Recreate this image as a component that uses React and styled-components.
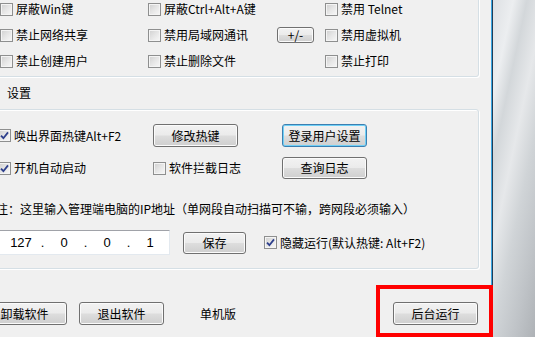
import React from 'react'
import styled, { createGlobalStyle } from 'styled-components'

const GlobalStyle = createGlobalStyle`
  html, body {
    margin: 0;
    padding: 0;
    overflow: hidden;
  }
  body {
    font-family: "Noto Sans CJK SC", "Noto Sans", "Liberation Sans", sans-serif;
    font-size: 12px;
    color: #000;
  }
`

const Page = styled.div`
  position: relative;
  width: 535px;
  height: 337px;
  display: flex;
  overflow: hidden;
`

const Window = styled.div`
  width: 491px;
  height: 337px;
  flex: none;
  background: #f0f0f0;
  display: flex;
  flex-direction: column;
  overflow: hidden;
`

const WindowEdge = styled.div`
  width: 1px;
  flex: none;
  background: #3aa6e2;
  border-right: 1px solid #1f3d58;
`

const Desktop = styled.div`
  flex: 1;
  background: linear-gradient(
    102deg,
    #dde0e3 0%,
    #eceef0 18%,
    #d3d7da 30%,
    #e6e8ea 46%,
    #d0d4d7 62%,
    #bfc3c7 82%,
    #aeb2b6 100%
  );
`

const Highlight = styled.div`
  position: absolute;
  left: 376px;
  top: 285px;
  width: 117px;
  height: 52px;
  box-sizing: border-box;
  border: 4px solid #f00;
  pointer-events: none;
`

const GroupBox = styled.div`
  box-sizing: border-box;
  flex: none;
  margin-left: -20px;
  width: 499px;
  height: ${p => p.$h}px;
  border: 1px solid #d5dfe5;
  border-radius: 3px;
  box-shadow: inset 1px 1px 0 #fff, 1px 1px 0 #fff;
  padding: ${p => p.$pad};
`

const TopBox = styled(GroupBox)`
  margin-top: -10px;
`

const CheckGrid = styled.div`
  display: grid;
  grid-template-columns: 148px 129px 48px auto;
  grid-auto-rows: 16px;
  row-gap: 10px;
  align-items: center;
`

const SettingsGrid = styled.div`
  display: grid;
  grid-template-columns: 155px 129px auto;
  grid-template-rows: 23px 22px;
  row-gap: 10px;
  align-items: center;
`

const SectionLabel = styled.div`
  height: 32px;
  flex: none;
  display: flex;
  align-items: center;
  padding-left: 7px;
  line-height: 16px;
`

const Label = styled.label`
  display: flex;
  align-items: center;
  gap: 3px;
  white-space: nowrap;
  line-height: 16px;
  margin-left: ${p => p.$ml || 0}px;
`

const Box = styled.span`
  box-sizing: border-box;
  width: 13px;
  height: 13px;
  flex: none;
  border: 1px solid #8e8f8f;
  background: linear-gradient(135deg, #cfcfcf 0%, #e6e6e6 50%, #f8f8f8 100%);
  box-shadow: inset 0 0 0 1px #f4f4f4;
  display: flex;
  align-items: center;
  justify-content: center;
`

const Button = styled.div`
  box-sizing: border-box;
  width: ${p => p.$w || 85}px;
  height: ${p => p.$h || 23}px;
  margin-left: ${p => p.$ml || 0}px;
  flex: none;
  display: flex;
  align-items: center;
  justify-content: center;
  border: 1px solid ${p => (p.$focus ? '#3c7fb1' : '#707070')};
  border-radius: 3px;
  background: linear-gradient(#f2f2f2 0%, #ebebeb 48%, #dddddd 52%, #cfcfcf 100%);
  box-shadow: inset 0 0 0 1px ${p => (p.$focus ? '#6fd0f6' : '#fbfbfb')};
  line-height: 16px;
  white-space: nowrap;
`

const Note = styled.div`
  margin: 22px 0 0 -2px;
  line-height: 16px;
  white-space: nowrap;
`

const IpRow = styled.div`
  display: flex;
  align-items: center;
  height: 25px;
  margin-top: 13px;
`

const IpInput = styled.div`
  box-sizing: border-box;
  width: 180px;
  height: 25px;
  margin-left: -8px;
  flex: none;
  background: #fff;
  border: 1px solid #abadb3;
  border-top-color: #a0a2a8;
  border-right-color: #e3e9ef;
  border-bottom-color: #e3e9ef;
  padding-left: 13px;
  display: flex;
  align-items: center;
  font-family: "Liberation Sans", Arial, sans-serif;
  font-size: 13px;
`

const IpSeg = styled.span`
  width: 34px;
  text-align: center;
`

const IpDot = styled.span`
  width: 9px;
  text-align: center;
`

const BottomBar = styled.div`
  display: flex;
  align-items: center;
  height: 23px;
  margin-top: 33px;
  flex: none;
`

const Text = styled.span`
  margin-left: ${p => p.$ml || 0}px;
  line-height: 16px;
  white-space: nowrap;
`

const Empty = styled.span``

const Check = ({ checked, children, ml }) => (
  <Label $ml={ml}>
    <Box>
      {checked && (
        <svg width="9" height="9" viewBox="0 0 9 9">
          <path d="M1 4.6 L3.4 7.2 L8 1.4" fill="none" stroke="#2d3f8c" strokeWidth="1.8" />
        </svg>
      )}
    </Box>
    <span>{children}</span>
  </Label>
)

export default function App() {
  return (
    <Page>
      <GlobalStyle />
      <Window>
        <TopBox $h={87} $pad="10px 0 0 19px">
          <CheckGrid>
            <Check>屏蔽Win键</Check>
            <Check>屏蔽Ctrl+Alt+A键</Check>
            <Empty />
            <Check>禁用 Telnet</Check>

            <Check>禁止网络共享</Check>
            <Check>禁用局域网通讯</Check>
            <Button $w={37} $h={16}>+/-</Button>
            <Check>禁用虚拟机</Check>

            <Check>禁止创建用户</Check>
            <Check>禁止删除文件</Check>
            <Empty />
            <Check>禁止打印</Check>
          </CheckGrid>
        </TopBox>

        <SectionLabel>设置</SectionLabel>

        <GroupBox $h={160} $pad="14px 0 0 17px">
          <SettingsGrid>
            <Check checked>唤出界面热键Alt+F2</Check>
            <Button>修改热键</Button>
            <Button $focus>登录用户设置</Button>

            <Check checked>开机自动启动</Check>
            <Check>软件拦截日志</Check>
            <Button $h={22}>查询日志</Button>
          </SettingsGrid>

          <Note>注：这里输入管理端电脑的IP地址（单网段自动扫描可不输，跨网段必须输入）</Note>

          <IpRow>
            <IpInput>
              <IpSeg>127</IpSeg>
              <IpDot>.</IpDot>
              <IpSeg>0</IpSeg>
              <IpDot>.</IpDot>
              <IpSeg>0</IpSeg>
              <IpDot>.</IpDot>
              <IpSeg>1</IpSeg>
            </IpInput>
            <Button $w={63} $h={22} $ml={13}>保存</Button>
            <Check checked ml={18}>隐藏运行(默认热键: Alt+F2)</Check>
          </IpRow>
        </GroupBox>

        <BottomBar>
          <Button $ml={-18}>卸载软件</Button>
          <Button $ml={12}>退出软件</Button>
          <Text $ml={36}>单机版</Text>
          <Button $ml={157}>后台运行</Button>
        </BottomBar>
      </Window>
      <WindowEdge />
      <Desktop />
      <Highlight />
    </Page>
  )
}
